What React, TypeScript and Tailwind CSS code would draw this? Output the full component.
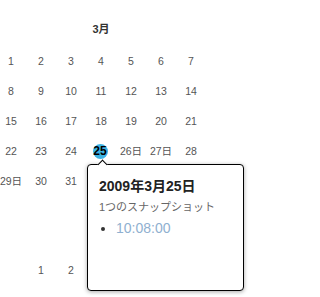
const FONT = "font-['Liberation_Sans','Noto_Sans_CJK_JP',sans-serif]";

type Cell = { label: string; active?: boolean } | null;

const march: Cell[][] = [
  ["1", "2", "3", "4", "5", "6", "7"].map((l) => ({ label: l })),
  ["8", "9", "10", "11", "12", "13", "14"].map((l) => ({ label: l })),
  ["15", "16", "17", "18", "19", "20", "21"].map((l) => ({ label: l })),
  [
    { label: "22" },
    { label: "23" },
    { label: "24" },
    { label: "25", active: true },
    { label: "26日" },
    { label: "27日" },
    { label: "28" },
  ],
  [{ label: "29日" }, { label: "30" }, { label: "31" }, null, null, null, null],
];

const april: Cell[][] = [[null, { label: "1" }, { label: "2" }, null, null, null, null]];

function Month({ title, weeks }: { title: string; weeks: Cell[][] }) {
  return (
    <div className="w-[210px]">
      <div className="h-[26px] flex items-center justify-center text-[11px] font-bold text-[#333]">
        {title}
      </div>
      <div className="mt-[5px] grid grid-cols-[repeat(7,30px)]">
        {weeks.flat().map((c, i) => (
          <div key={i} className="h-[30px] flex items-center justify-center text-[10.5px] text-[#555]">
            {c &&
              (c.active ? (
                <span className="w-[15px] h-[15px] -mt-[2px] -ml-[2px] rounded-full bg-[#3cb3e4] flex items-center justify-center text-[12px] font-bold text-black">
                  {c.label}
                </span>
              ) : (
                c.label
              ))}
          </div>
        ))}
      </div>
    </div>
  );
}

export default function App() {
  return (
    <div className={`relative w-[254px] h-[297px] overflow-hidden bg-white ${FONT}`}>
      <div className="-ml-[4px] pt-[16px] flex flex-col">
        <Month title="3月" weeks={march} />
        <div className="mt-[28px]">
          <Month title="4月" weeks={april} />
        </div>
      </div>

      {/* snapshot popup */}
      <div className="absolute left-[87px] top-[164px] w-[157px] h-[127px] bg-white border border-black rounded-[4px] shadow-[0_1px_4px_rgba(0,0,0,0.35)] px-[11px] pt-[12px]">
        <div className="absolute -top-[4px] left-[11px] w-[7px] h-[7px] rotate-45 bg-white border-t border-l border-black" />
        <div className="text-[14px] font-bold text-[#222] leading-[18px]">2009年3月25日</div>
        <div className="mt-[4px] text-[11px] text-[#666] leading-[16px]">1つのスナップショット</div>
        <ul className="mt-[4px] list-disc pl-[17px] text-[#333] text-[14px] leading-[18px]">
          <li>
            <a className="text-[#8fb0d0]">10:08:00</a>
          </li>
        </ul>
      </div>
    </div>
  );
}
